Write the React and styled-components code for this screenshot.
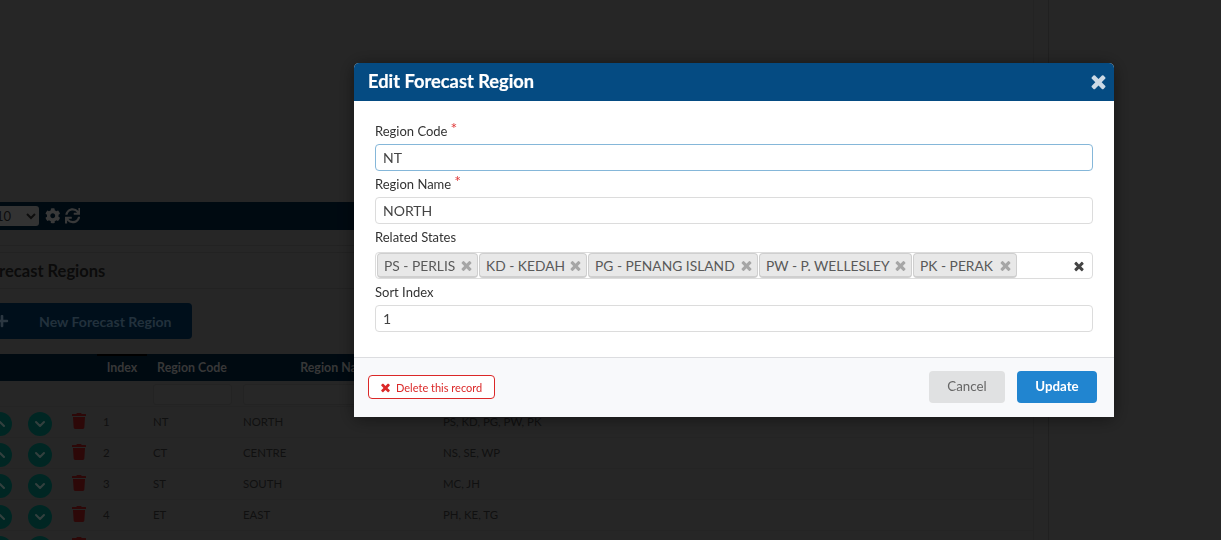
import React from 'react'
import styled, { createGlobalStyle } from 'styled-components'
import { ChevronUp, ChevronDown } from 'lucide-react'
import { FaCog, FaSync, FaPlus, FaTrash } from 'react-icons/fa'

const GlobalStyle = createGlobalStyle`
  html, body { margin: 0; height: 100%; overflow: hidden; }
  body { font-family: Lato, "Liberation Sans", sans-serif; font-size: 14px; color: #333; background: #606060; }
  * { box-sizing: border-box; }
`

const Page = styled.div`
  display: flex;
  height: 540px;
  overflow: hidden;
`
const Main = styled.main`
  width: 1034px;
  padding-top: 202px;
  overflow: hidden;
  border-right: 1px solid #585858;
`
const Rail = styled.div`
  width: 15px;
  border-right: 1px solid #505050;
`
const Toolbar = styled.div`
  height: 28px;
  background: #00192c;
  display: flex;
  align-items: center;
  gap: 4px;
  color: #8f8f8f;
  font-size: 15.5px;
`
const PageSelect = styled.select`
  width: 47px;
  height: 20px;
  margin-left: -8px;
  margin-right: 2px;
  border: 0;
  border-radius: 3px;
  background: #808080;
  color: #222;
  font: 13px Lato, sans-serif;
`
const Rules = styled.div`
  height: 8px;
  margin-top: 15px;
  border-top: 1px solid #555;
  border-bottom: 1px solid #555;
`
const Heading = styled.h2`
  margin: 0 0 0 -19px;
  height: 35px;
  padding-top: 1px;
  font-size: 16.5px;
  line-height: 35px;
  font-weight: 700;
  color: #1c1c1c;
  white-space: nowrap;
`
const Divider = styled.div`
  border-top: 1px solid #555;
`
const NewButton = styled.button`
  display: flex;
  align-items: center;
  width: 212px;
  height: 36px;
  margin: 14px 0 15px -20px;
  padding: 0 0 0 15px;
  border: 0;
  border-radius: 4px;
  background: #002644;
  color: #567a96;
  font: 700 14.1px Lato, sans-serif;
  svg { margin-right: 30px; font-size: 14px; color: #6d8ba3; }
`
const Table = styled.table`
  width: 1053px;
  margin-left: -20px;
  border-collapse: collapse;
  table-layout: fixed;
`
const HeadCell = styled.th`
  height: 26px;
  background: #00192c;
  padding: 0 0 3px;
  font-size: 12.4px;
  font-weight: 700;
  color: #8a8a8a;
  text-align: center;
  border-top: 2px solid ${p => (p.$sorted ? '#000' : '#00192c')};
`
const FilterCell = styled.td`
  height: 25px;
  padding: 3px 5px 1px 6px;
`
const FilterInput = styled.div`
  height: 21px;
  border: 1px solid #585858;
  border-radius: 3px;
  background: #626262;
`
const Cell = styled.td`
  height: 31px;
  padding: 0 0 2px 6px;
  font-size: 11.4px;
  color: #2a2a2a;
  border-top: 1px solid #5a5a5a;
`
const IconCell = styled.td`
  height: 31px;
  padding: 0;
  border-top: 1px solid #5a5a5a;
`
const RoundButton = styled.span`
  display: flex;
  align-items: center;
  justify-content: center;
  width: 24px;
  height: 24px;
  margin: 3px auto 0;
  border-radius: 50%;
  background: #006058;
  color: #80a09c;
`
const TrashIcon = styled(FaTrash)`
  display: block;
  margin: -3px auto 0;
  font-size: 16px;
  color: #701414;
`
const Modal = styled.div`
  position: fixed;
  inset: 0;
  background: rgba(0, 0, 0, 0.6);
  display: flex;
  align-items: flex-start;
  padding: 63px 0 0 354px;
`
const Dialog = styled.section`
  width: 760px;
  background: #fff;
  border-radius: 5px 5px 0 0;
  box-shadow: 0 2px 18px rgba(0, 0, 0, 0.45);
`
const DialogHeader = styled.header`
  height: 38px;
  display: flex;
  align-items: center;
  justify-content: space-between;
  padding: 0 5px 2px 14px;
  background: #054b82;
  border-radius: 5px 5px 0 0;
  color: #ccd9e5;
`
const DialogTitle = styled.h1`
  margin: 0;
  font-size: 18.3px;
  font-weight: 700;
  color: #fff;
  -webkit-text-stroke: 0.2px #fff;
`
const DialogBody = styled.div`
  padding: 17px 21px 25px;
`
const Label = styled.label`
  display: block;
  height: 26px;
  padding-top: 5px;
  font-size: 13px;
  line-height: 16px;
  color: #333;
  sup {
    position: relative;
    top: 3px;
    margin-left: 3px;
    font-size: 16px;
    line-height: 0;
    color: #e03a3a;
  }
`
const TextBox = styled.input`
  display: block;
  width: 100%;
  height: 27px;
  padding: 0 7px;
  border: 1px solid ${p => (p.$focused ? '#85b7d9' : '#dcdcdc')};
  border-radius: 4px;
  outline: 0;
  background: #fff;
  color: #444;
  font: 14px Lato, sans-serif;
`
const ChipBox = styled.div`
  display: flex;
  align-items: center;
  height: 27px;
  margin-top: 2px;
  padding: 0 6px 0 1px;
  border: 1px solid #dcdcdc;
  border-radius: 4px;
  color: #444;
`
const Chip = styled.span`
  display: flex;
  align-items: center;
  justify-content: space-between;
  width: ${p => p.$w}px;
  height: 25px;
  margin-right: 1px;
  padding: 0 3px 0 6px;
  border: 1px solid #cfcfcf;
  border-bottom-width: 2px;
  border-radius: 4px;
  background: #e8e8e8;
  color: #595959;
  font-size: 13.8px;
  white-space: nowrap;
  svg { color: #a6a6a6; flex: none; }
`
const ClearAll = styled.span`
  display: flex;
  margin-left: auto;
`
const DialogFooter = styled.footer`
  height: 60px;
  display: flex;
  align-items: center;
  padding: 0 17px 2px 14px;
  background: #f8f9fb;
  border-top: 1px solid #dcdde0;
`
const DeleteButton = styled.button`
  display: flex;
  align-items: center;
  gap: 4px;
  width: 127px;
  height: 24px;
  padding: 1px 0 0 10px;
  border: 1px solid #db2828;
  border-radius: 4px;
  background: #fff;
  color: #db2828;
  font: 11px Lato, sans-serif;
`
const ActionButton = styled.button`
  width: ${p => p.$w}px;
  height: 32px;
  margin-left: ${p => p.$gap}px;
  padding: 0 0 1px;
  border: 0;
  border-radius: 4px;
  background: ${p => (p.$primary ? '#2185d0' : '#e0e1e2')};
  color: ${p => (p.$primary ? '#fff' : '#666')};
  font: ${p => (p.$primary ? 700 : 400)} 13.3px Lato, sans-serif;
`
const Spacer = styled.div`
  flex: 1;
`

// the chunky font-awesome 4 "remove" cross, react-icons only has the thin one
const Cross = ({ size }) => (
  <svg width={size} height={size} viewBox="0 0 1792 1792" fill="currentColor">
    <path d="M1490 1322q0 40-28 68l-136 136q-28 28-68 28t-68-28l-294-294-294 294q-28 28-68 28t-68-28l-136-136q-28-28-28-68t28-68l294-294-294-294q-28-28-28-68t28-68l136-136q28-28 68-28t68 28l294 294 294-294q28-28 68-28t68 28l136 136q28 28 28 68t-28 68l-294 294 294 294q28 28 28 68z" />
  </svg>
)

const rows = [
  ['1', 'NT', 'NORTH', 'PS, KD, PG, PW, PK'],
  ['2', 'CT', 'CENTRE', 'NS, SE, WP'],
  ['3', 'ST', 'SOUTH', 'MC, JH'],
  ['4', 'ET', 'EAST', 'PH, KE, TG'],
  ['', '', '', ''],
]

const chips = [
  ['PS - PERLIS', 101],
  ['KD - KEDAH', 108],
  ['PG - PENANG ISLAND', 170],
  ['PW - P. WELLESLEY', 153],
  ['PK - PERAK', 104],
]

function RegionTable() {
  return (
    <Table>
      <colgroup>
        <col width="40" /><col width="40" /><col width="37" /><col width="50" />
        <col width="90" /><col width="200" /><col />
      </colgroup>
      <thead>
        <tr>
          <HeadCell /><HeadCell /><HeadCell />
          <HeadCell $sorted>Index</HeadCell>
          <HeadCell>Region Code</HeadCell>
          <HeadCell>Region Name</HeadCell>
          <HeadCell>Related States</HeadCell>
        </tr>
        <tr>
          <FilterCell /><FilterCell /><FilterCell /><FilterCell />
          <FilterCell><FilterInput /></FilterCell>
          <FilterCell><FilterInput /></FilterCell>
          <FilterCell />
        </tr>
      </thead>
      <tbody>
        {rows.map((r, i) => (
          <tr key={i}>
            <IconCell><RoundButton><ChevronUp size={16} strokeWidth={3} /></RoundButton></IconCell>
            <IconCell><RoundButton><ChevronDown size={16} strokeWidth={3} /></RoundButton></IconCell>
            <IconCell><TrashIcon /></IconCell>
            <Cell>{r[0]}</Cell>
            <Cell>{r[1]}</Cell>
            <Cell>{r[2]}</Cell>
            <Cell>{r[3]}</Cell>
          </tr>
        ))}
      </tbody>
    </Table>
  )
}

export default function App() {
  return (
    <>
      <GlobalStyle />
      <Page>
        <Main>
          <Toolbar>
            <PageSelect defaultValue="10"><option>10</option></PageSelect>
            <FaCog />
            <FaSync />
          </Toolbar>
          <Rules />
          <Heading>Forecast Regions</Heading>
          <Divider />
          <NewButton><FaPlus />New Forecast Region</NewButton>
          <RegionTable />
        </Main>
        <Rail />
      </Page>
      <Modal>
        <Dialog>
          <DialogHeader>
            <DialogTitle>Edit Forecast Region</DialogTitle>
            <Cross size={21} />
          </DialogHeader>
          <DialogBody>
            <Label>Region Code<sup>*</sup></Label>
            <TextBox $focused defaultValue="NT" />
            <Label>Region Name<sup>*</sup></Label>
            <TextBox defaultValue="NORTH" />
            <Label>Related States</Label>
            <ChipBox>
              {chips.map(([text, w]) => (
                <Chip key={text} $w={w}>{text}<Cross size={15} /></Chip>
              ))}
              <ClearAll><Cross size={14} /></ClearAll>
            </ChipBox>
            <Label>Sort Index</Label>
            <TextBox defaultValue="1" />
          </DialogBody>
          <DialogFooter>
            <DeleteButton><Cross size={13} />Delete this record</DeleteButton>
            <Spacer />
            <ActionButton $w={76}>Cancel</ActionButton>
            <ActionButton $w={80} $gap={12} $primary>Update</ActionButton>
          </DialogFooter>
        </Dialog>
      </Modal>
    </>
  )
}
